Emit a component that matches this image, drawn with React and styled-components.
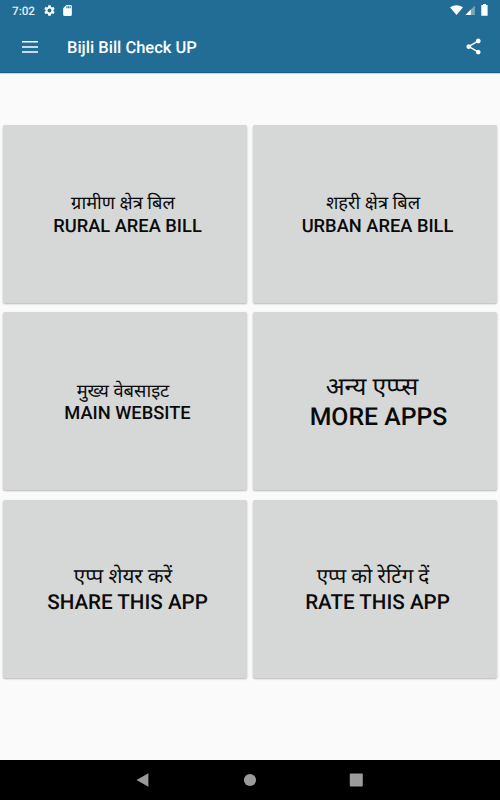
import React from "react";
import styled, { createGlobalStyle } from "styled-components";
import { MdSettings, MdSdCard, MdShare } from "react-icons/md";

const tiles = [
  { hindi: "ग्रामीण क्षेत्र बिल", english: "RURAL AREA BILL", size: 18.3, hindiShift: -2, shift: 2.5 },
  { hindi: "शहरी क्षेत्र बिल", english: "URBAN AREA BILL", size: 18.3, hindiShift: -2, shift: 2.5 },
  { hindi: "मुख्य वेबसाइट", english: "MAIN WEBSITE", size: 18.3, hindiShift: -2, shift: 2.5 },
  { hindi: "अन्य एप्प्स", english: "MORE APPS", size: 24.8, hindiShift: -3, shift: 3.5 },
  { hindi: "एप्प शेयर करें", english: "SHARE THIS APP", size: 20.6, hindiShift: -2, shift: 2.5 },
  { hindi: "एप्प को रेटिंग दें", english: "RATE THIS APP", size: 20.6, hindiShift: -2, shift: 2.5 },
];

const App = () => {
  return (
    <Screen>
      <GlobalStyle />
      <Header>
        <StatusBar>
          <Clock>7:02</Clock>
          <MdSettings size={13} />
          <CardIcon size={13} />
          <Signals width="40" height="14" viewBox="0 0 40 14">
            <path d="M0 3.3Q6.5-.8 13 3.3L6.5 11z" fill="#fff" />
            <path d="M24.8 1.5V11H15.5z" fill="#fff" fillOpacity="0.4" />
            <path d="M20.8 5.5V11H15.5z" fill="#fff" />
            <path d="M33 0h3v1h1.6v10.7h-6.3V1H33z" fill="#fff" />
          </Signals>
        </StatusBar>
        <Toolbar>
          <IconButton aria-label="Menu">
            <svg width="22" height="22" viewBox="0 0 22 22">
              <path d="M3 5.7h16M3 10.9h16M3 16.1h16" stroke="#fff" strokeWidth="1.5" />
            </svg>
          </IconButton>
          <Title>Bijli Bill Check UP</Title>
          <IconButton aria-label="Share">
            <MdShare size={19} />
          </IconButton>
        </Toolbar>
      </Header>
      <TileGrid>
        {tiles.map((tile) => (
          <Tile key={tile.english}>
            <Hindi $size={tile.size} $shift={tile.hindiShift}>
              {tile.hindi}
            </Hindi>
            <English $size={tile.size} $shift={tile.shift}>
              {tile.english}
            </English>
          </Tile>
        ))}
      </TileGrid>
      <NavBar>
        <svg width="14" height="16" viewBox="0 0 14 16">
          <path d="M.5 8 12.4 1.3v13.4z" />
        </svg>
        <svg width="14" height="14" viewBox="0 0 14 14">
          <circle cx="7" cy="7" r="6.1" />
        </svg>
        <svg width="14" height="14" viewBox="0 0 14 14">
          <rect x=".8" y=".5" width="13" height="13" rx="1" />
        </svg>
      </NavBar>
    </Screen>
  );
};

export default App;

const GlobalStyle = createGlobalStyle`
  body {
    margin: 0;
    font-family: Roboto, "Noto Sans", sans-serif;
    text-rendering: geometricPrecision;
  }
`;

const Screen = styled.div`
  display: flex;
  flex-direction: column;
  width: 500px;
  height: 800px;
  background: #fafafa;
`;

const Header = styled.header`
  height: 73px;
  box-sizing: border-box;
  background: #226d96;
  border-bottom: 1px solid #0f6090;
  box-shadow: 0 1px 1px rgba(0, 0, 0, 0.15);
  color: #fff;
`;

const StatusBar = styled.div`
  display: flex;
  align-items: center;
  height: 21px;
  padding: 0 11px 0 12px;
`;

const Clock = styled.span`
  width: 31px;
  font-size: 11.7px;
  font-weight: 500;
  color: #e6eef3;
`;

const CardIcon = styled(MdSdCard)`
  margin-left: 5px;
`;

const Signals = styled.svg`
  margin-left: auto;
  margin-right: -1px;
`;

const Toolbar = styled.div`
  display: flex;
  align-items: center;
  height: 51px;
  padding: 0 17px 0 19px;
`;

const IconButton = styled.button`
  display: flex;
  padding: 0;
  border: 0;
  background: none;
  color: #fff;
`;

const Title = styled.h1`
  flex: 1;
  margin: 3px 0 0 26px;
  font-size: 16.5px;
  font-weight: 500;
`;

const TileGrid = styled.main`
  flex: 1;
  display: grid;
  grid-template-columns: 1fr 1fr;
  grid-auto-rows: 178px;
  gap: 9.7px 6px;
  padding: 51.7px 3px 0;
`;

const Tile = styled.button`
  display: flex;
  flex-direction: column;
  align-items: center;
  justify-content: center;
  padding: 4px 0 0;
  border: 0;
  border-radius: 2px;
  background: #d6d8d7;
  box-shadow: 0 1px 2px rgba(0, 0, 0, 0.28);
  color: #0a0a0a;
  font-family: inherit;
  text-rendering: inherit;
`;

const Hindi = styled.span`
  margin-left: ${({ $shift }) => $shift * 2}px;
  font-size: ${({ $size }) => $size}px;
  line-height: 1.24;
  white-space: nowrap;
`;

const English = styled.span`
  margin-left: ${({ $shift }) => $shift * 2}px;
  font-size: ${({ $size }) => $size}px;
  font-weight: 500;
  line-height: 1.25;
  white-space: nowrap;
`;

const NavBar = styled.nav`
  display: flex;
  justify-content: space-between;
  align-items: center;
  height: 40px;
  padding: 0 137px 0 136px;
  background: #000;
  fill: #9b9b9b;
`;
